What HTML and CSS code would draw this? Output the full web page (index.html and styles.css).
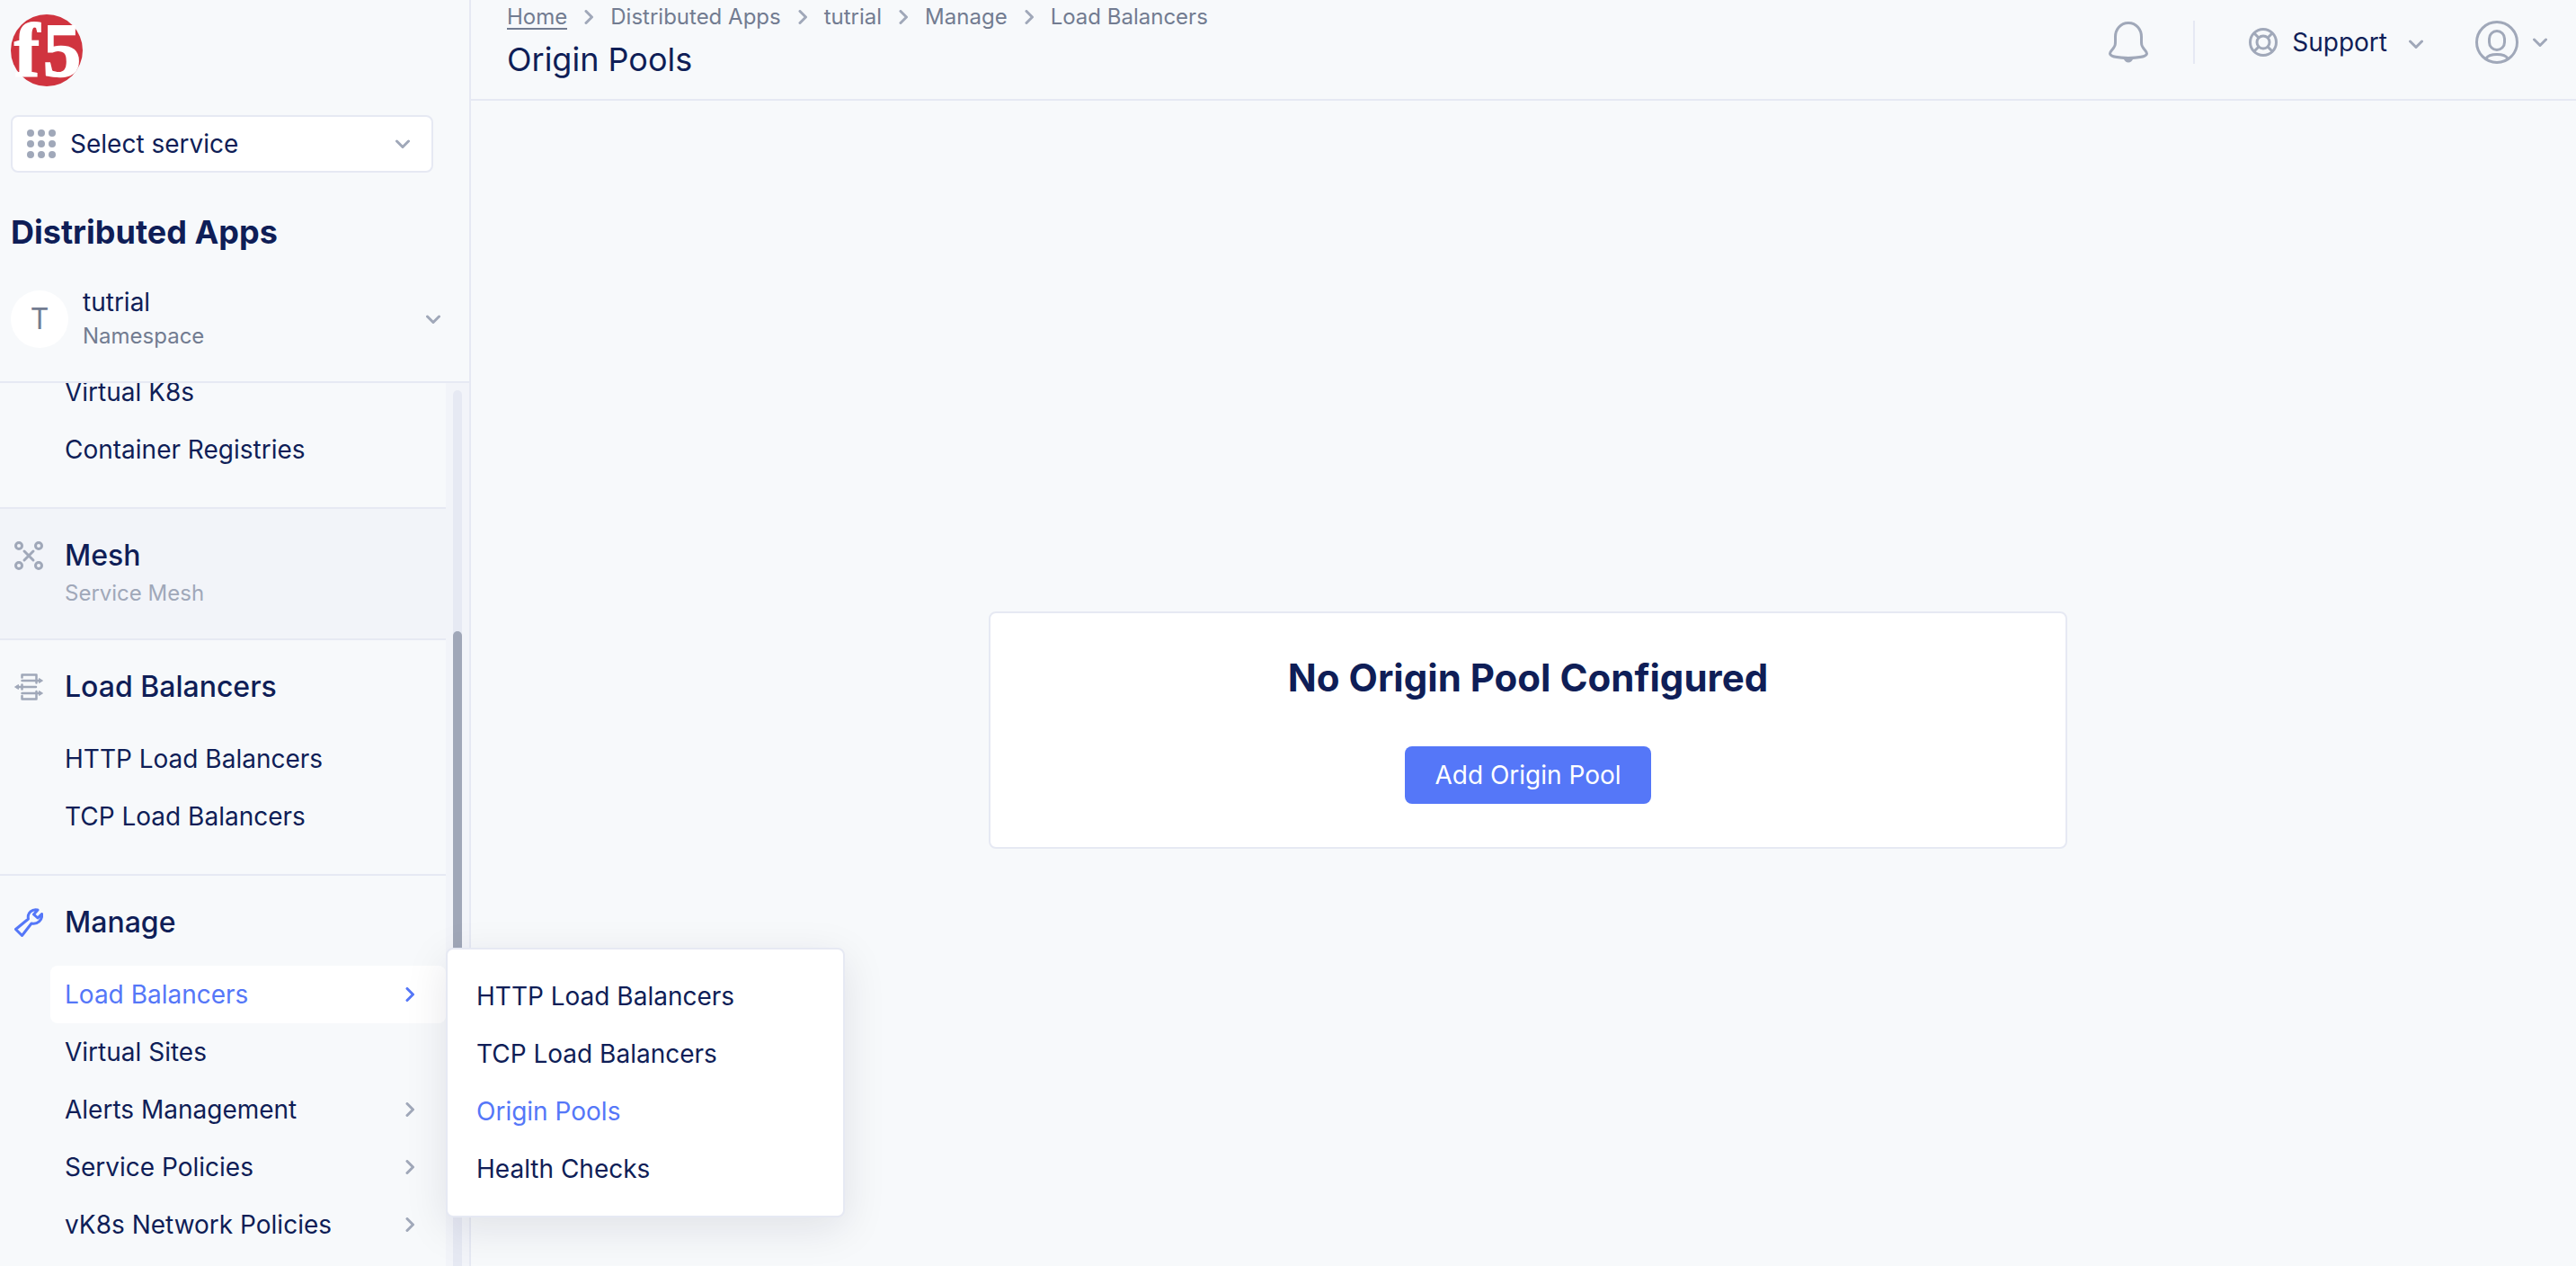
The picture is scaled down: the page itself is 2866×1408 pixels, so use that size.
FILE: index.html
```html
<!DOCTYPE html>
<html lang="en">
<head>
<meta charset="utf-8">
<meta name="viewport" content="width=device-width, initial-scale=1">
<title>Origin Pools</title>
<link rel="stylesheet" href="styles.css">
</head>
<body>
<svg class="sprite" aria-hidden="true">
  <symbol id="chevron-down" viewBox="0 0 16 16"><path d="M1.500 5 8 11.500 14.500 5"/></symbol>
  <symbol id="chevron-right" viewBox="0 0 16 16"><path d="M5 1.500 11.500 8 5 14.500"/></symbol>
</svg>
<div class="app">
  <aside class="sidebar">
    <div class="sidebar-top">
      <a class="logo" href="#" aria-label="F5">
        <svg width="80" height="80" viewBox="0 0 80 80">
          <circle cx="40" cy="40" r="40" fill="#d0343f" stroke="none"/>
          <text class="logo-text" x="4" y="69">f</text>
          <text class="logo-text" x="36" y="69">5</text>
        </svg>
      </a>
      <div class="service">
        <svg class="dots" width="32" height="32" viewBox="0 0 32 32" aria-hidden="true">
          <circle cx="4" cy="4" r="4"/><circle cx="16" cy="4" r="4"/><circle cx="28" cy="4" r="4"/>
          <circle cx="4" cy="16" r="4"/><circle cx="16" cy="16" r="4"/><circle cx="28" cy="16" r="4"/>
          <circle cx="4" cy="28" r="4"/><circle cx="16" cy="28" r="4"/><circle cx="28" cy="28" r="4"/>
        </svg>
        <select class="service-select" aria-label="Service"><option>Select service</option></select>
        <svg class="chevron" aria-hidden="true"><use href="#chevron-down"/></svg>
      </div>
      <h2 class="product">Distributed Apps</h2>
      <button class="namespace" type="button">
        <span class="avatar">T</span>
        <span class="namespace-text">
          <span class="namespace-name">tutrial</span>
          <span class="namespace-label">Namespace</span>
        </span>
        <svg class="chevron" aria-hidden="true"><use href="#chevron-down"/></svg>
      </button>
    </div>
    <div class="scroller">
      <nav class="nav">
        <section class="group group-first">
          <ul class="items">
            <li class="item"><a href="#">Virtual K8s</a></li>
            <li class="item"><a href="#">Container Registries</a></li>
          </ul>
        </section>
        <section class="group group-mesh">
          <div class="heading">
            <svg class="icon" viewBox="0 0 32 32" aria-hidden="true">
              <g stroke-width="3"><circle cx="5" cy="5" r="3.500"/><circle cx="27" cy="5" r="3.500"/><circle cx="5" cy="27" r="3.500"/><circle cx="27" cy="27" r="3.500"/><path stroke-linecap="round" d="m11 11 10 10M21 11 11 21"/></g>
            </svg>
            <h3>Mesh</h3>
          </div>
          <p class="note">Service Mesh</p>
        </section>
        <section class="group">
          <div class="heading">
            <svg class="icon" viewBox="0 0 32 32" aria-hidden="true">
              <g stroke-width="2.500" stroke-linecap="round" stroke-linejoin="round"><path d="M8.500 5.500V2.500h16v9M8.500 26v3.500h16V21M8.500 9H28M8.500 23H28M4 16h20M8.500 13.500v5"/></g>
              <g fill="currentColor" stroke-width="1" stroke-linejoin="round"><path d="m27.500 6.500 4 2.500-4 2.500zM27.500 20.500l4 2.500-4 2.500zM4.500 13.500.500 16l4 2.500z"/></g>
            </svg>
            <h3>Load Balancers</h3>
          </div>
          <ul class="items">
            <li class="item"><a href="#">HTTP Load Balancers</a></li>
            <li class="item"><a href="#">TCP Load Balancers</a></li>
          </ul>
        </section>
        <section class="group">
          <div class="heading">
            <svg class="icon icon-active" viewBox="0 0 32 32" aria-hidden="true">
              <path stroke-width="3" stroke-linejoin="round" d="M26 2C20 .500 14 5 15.500 12L1.500 23.500l7 7 10.500-13.500c6.500 1.500 12.500-3.500 11.500-10.500l-4.500 4.500-4.500-4z"/>
            </svg>
            <h3>Manage</h3>
          </div>
          <ul class="items">
            <li class="item item-open">
              <a href="#">Load Balancers<svg class="chevron" aria-hidden="true"><use href="#chevron-right"/></svg></a>
              <ul class="submenu">
                <li><a href="#">HTTP Load Balancers</a></li>
                <li><a href="#">TCP Load Balancers</a></li>
                <li><a class="current" href="#" aria-current="page">Origin Pools</a></li>
                <li><a href="#">Health Checks</a></li>
              </ul>
            </li>
            <li class="item"><a href="#">Virtual Sites</a></li>
            <li class="item"><a href="#">Alerts Management<svg class="chevron" aria-hidden="true"><use href="#chevron-right"/></svg></a></li>
            <li class="item"><a href="#">Service Policies<svg class="chevron" aria-hidden="true"><use href="#chevron-right"/></svg></a></li>
            <li class="item"><a href="#">vK8s Network Policies<svg class="chevron" aria-hidden="true"><use href="#chevron-right"/></svg></a></li>
          </ul>
        </section>
      </nav>
      <div class="scrollbar"><div class="track"><div class="thumb"></div></div></div>
    </div>
  </aside>
  <div class="page">
    <header class="topbar">
      <div class="titles">
        <nav class="breadcrumbs" aria-label="Breadcrumb">
          <a class="home" href="#">Home</a>
          <svg class="chevron" aria-hidden="true"><use href="#chevron-right"/></svg>
          <a href="#">Distributed Apps</a>
          <svg class="chevron" aria-hidden="true"><use href="#chevron-right"/></svg>
          <a href="#">tutrial</a>
          <svg class="chevron" aria-hidden="true"><use href="#chevron-right"/></svg>
          <a href="#">Manage</a>
          <svg class="chevron" aria-hidden="true"><use href="#chevron-right"/></svg>
          <a href="#">Load Balancers</a>
        </nav>
        <h1>Origin Pools</h1>
      </div>
      <div class="actions">
        <button class="bell" type="button" aria-label="Notifications">
          <svg width="44" height="46" viewBox="0 0 44 46">
            <path d="M22 1.500C13 1.500 7.500 9 7.500 17c0 8 .500 9-2.500 13C3 32.500 1.500 33.500 1.500 35.500c0 3.500 10 5 20.500 5s20.500-1.500 20.500-5c0-2-1.500-3-3.500-5.500-3-4-2.500-5-2.500-13 0-8-5.500-15.500-14.500-15.500z" stroke-width="3"/>
            <path d="M16.500 41h11c-1 2.500-3 4.500-5.500 4.500s-4.500-2-5.500-4.500z" fill="currentColor" stroke="none"/>
          </svg>
        </button>
        <button class="support" type="button">
          <svg width="32" height="32" viewBox="0 0 32 32" aria-hidden="true" stroke-width="3">
            <circle cx="16" cy="16" r="14.500"/><circle cx="16" cy="16" r="7"/>
            <path d="m6 6 5 5M26 6l-5 5M6 26l5-5M26 26l-5-5"/>
          </svg>
          <span>Support</span>
          <svg class="chevron" aria-hidden="true"><use href="#chevron-down"/></svg>
        </button>
        <button class="account" type="button" aria-label="Account">
          <svg width="48" height="48" viewBox="0 0 48 48" stroke-width="3">
            <circle cx="24" cy="24" r="22.500"/><rect x="15.500" y="11.500" width="17" height="21" rx="8.500"/>
            <path d="M12 42c2-3.500 6.500-4.500 12-4.500S34 38.500 36 42"/>
          </svg>
          <svg class="chevron" aria-hidden="true"><use href="#chevron-down"/></svg>
        </button>
      </div>
    </header>
    <main class="content">
      <section class="card">
        <h2>No Origin Pool Configured</h2>
        <button class="primary" type="button">Add Origin Pool</button>
      </section>
    </main>
  </div>
</div>
</body>
</html>
```
FILE: styles.css
```css
:root {
  --ink: #0f1e57;
  --muted: #727c91;
  --icon: #a0a8b9;
  --line: #e6e9f3;
  --bg: #f7f9fb;
  --tint: #f2f4f9;
  --blue: #5577f8;
}

* { box-sizing: border-box; }

body {
  margin: 0;
  background: var(--bg);
  color: var(--ink);
  font: 28px/32px Inter, "Liberation Sans", sans-serif;
}

h1, h2, h3, p, ul { margin: 0; padding: 0; }
ul { list-style: none; }
a { color: inherit; text-decoration: none; }
button {
  padding: 0;
  border: 0;
  background: none;
  color: inherit;
  font: inherit;
  cursor: pointer;
}
svg { flex: none; fill: none; stroke: currentColor; color: var(--icon); }

.sprite { position: absolute; width: 0; height: 0; }
.chevron {
  width: 16px;
  height: 16px;
  stroke-width: 3;
  stroke-linecap: round;
  stroke-linejoin: round;
}

.app { display: flex; height: 100vh; }

/* Sidebar */
.sidebar {
  display: flex;
  flex: none;
  flex-direction: column;
  width: 524px;
  border-right: 2px solid var(--line);
}
.sidebar-top {
  display: flex;
  flex-direction: column;
  padding: 16px 12px 34px;
  border-bottom: 2px solid var(--line);
}
.logo, .logo svg { display: block; }
.logo { width: 80px; }
.logo svg { overflow: visible; }
.logo-text {
  fill: #fff;
  stroke: #fff;
  stroke-width: 2px;
  font: bold 84px "Liberation Serif", serif;
}
.service {
  display: flex;
  align-items: center;
  height: 64px;
  margin: 32px 28px 0 0;
  padding: 0 24px 0 16px;
  border: 2px solid var(--line);
  border-radius: 8px;
  background: #fff;
}
.dots { fill: var(--icon); stroke: none; }
.service-select {
  flex: 1;
  margin-left: 16px;
  padding: 0;
  border: 0;
  appearance: none;
  background: none;
  color: inherit;
  font: inherit;
}
.product {
  margin-top: 46px;
  font-size: 36px;
  line-height: 40px;
  font-weight: 700;
}
.namespace {
  display: flex;
  align-items: center;
  margin: 42px 20px 0 0;
  text-align: left;
}
.avatar {
  width: 64px;
  height: 64px;
  margin-right: 16px;
  border-radius: 50%;
  background: #fff;
  color: var(--muted);
  font-size: 32px;
  line-height: 64px;
  text-align: center;
}
.namespace-text { display: flex; flex: 1; flex-direction: column; gap: 6px; }
.namespace-label { color: var(--muted); font-size: 24px; }

.scroller { display: flex; flex: 1; min-height: 0; overflow-x: visible; overflow-y: clip; }
.nav { flex: 1; }
.group { padding-bottom: 32px; border-bottom: 2px solid var(--line); }
.group:last-child { border-bottom: 0; }
/* The list is scrolled part of a row past its top */
.group-first { margin-top: -22px; }
.group-mesh { height: 146px; background: var(--tint); }
.heading {
  display: flex;
  align-items: center;
  gap: 24px;
  height: 100px;
  padding: 4px 16px 0;
}
.heading h3 { font-size: 32px; font-weight: 500; }
.icon { width: 32px; height: 32px; }
.icon-active { color: var(--blue); }
.group-mesh .heading { height: 76px; padding-top: 28px; }
.note { padding: 2px 0 0 72px; color: var(--icon); font-size: 24px; }
.item {
  position: relative;
  margin-left: 56px;
  border-radius: 8px;
}
.item > a {
  display: flex;
  align-items: center;
  justify-content: space-between;
  height: 64px;
  padding: 0 32px 0 16px;
}
.item-open { z-index: 1; background: #fff; }
.item-open > a, .item-open > a .chevron, .current { color: var(--blue); }

.submenu {
  position: absolute;
  top: -20px;
  left: 100%;
  width: 444px;
  padding: 20px 32px;
  border: 2px solid var(--line);
  border-radius: 8px;
  background: #fff;
  box-shadow: 0 12px 48px rgba(15, 20, 50, 0.1);
}
.submenu a { display: block; line-height: 64px; }

.scrollbar {
  width: 26px;
  padding: 8px 8px 0;
  overflow: hidden;
  background: var(--tint);
}
.track {
  width: 10px;
  height: 100%;
  padding-top: 268px;
  border-radius: 5px 5px 0 0;
  background: var(--line);
}
.thumb { height: 440px; border-radius: 5px; background: #a0a7b8; }

/* Page */
.page { display: flex; flex: 1; flex-direction: column; min-width: 0; }
.topbar {
  display: flex;
  justify-content: space-between;
  height: 112px;
  padding: 3px 32px 0 40px;
  border-bottom: 2px solid var(--line);
}
.breadcrumbs {
  display: flex;
  align-items: center;
  gap: 16px;
  height: 32px;
  color: var(--muted);
  font-size: 24px;
}
.home { align-self: flex-start; height: 30px; border-bottom: 2px solid var(--muted); }
.titles h1 { margin-top: 11px; font-size: 36px; line-height: 40px; font-weight: 400; }
.actions { display: flex; align-items: center; height: 88px; }
.actions button { display: flex; align-items: center; }
.actions .bell { height: 48px; padding-right: 50px; border-right: 2px solid var(--line); }
.support { gap: 16px; margin-left: 60px; }
.support .chevron { margin: 4px 0 0 8px; }
.account { gap: 16px; margin-left: 58px; }

.content {
  display: flex;
  flex: 1;
  align-items: center;
  justify-content: center;
  padding: 104px 0 0 10px;
}
.card {
  display: flex;
  flex-direction: column;
  align-items: center;
  width: 100%;
  max-width: 1200px;
  padding: 46px 32px 48px;
  border: 2px solid var(--line);
  border-radius: 8px;
  background: #fff;
}
.card h2 { font-size: 42px; line-height: 52px; font-weight: 700; }
.card .primary {
  height: 64px;
  margin-top: 50px;
  padding: 0 33px;
  border-radius: 8px;
  background: var(--blue);
  color: #fff;
}
```
